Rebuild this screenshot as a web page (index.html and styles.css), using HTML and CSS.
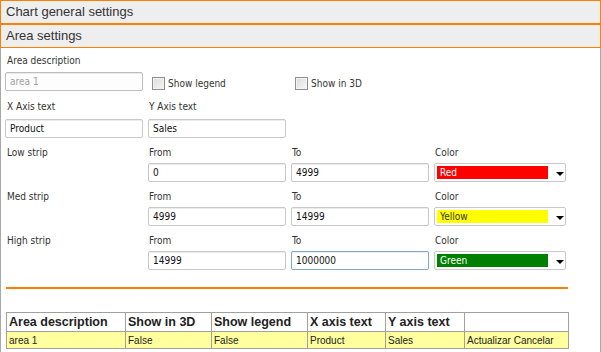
FILE: index.html
```html
<!DOCTYPE html>
<html>
	<head>
		<meta charset="UTF-8">
		<title>Chart settings</title>
		<link rel="stylesheet" href="styles.css">
	</head>
	<body>
		<div class="hdr">Chart general settings</div>
		<div class="hdr">Area settings</div>
		<div class="panel">
			<div class="form">
				<label class="lbl c1">Area description</label>
				<div class="inrow first">
					<div class="txt dis c1">area 1</div>
					<div class="chk"><span class="box"></span>Show legend</div>
					<div class="chk"><span class="box"></span>Show in 3D</div>
				</div>

				<div class="lblrow lbl2">
					<span>X Axis text</span>
					<span>Y Axis text</span>
				</div>
				<div class="inrow ax">
					<div class="txt">Product</div>
					<div class="txt">Sales</div>
				</div>

				<div class="lblrow lbl3">
					<span>Low strip</span>
					<span>From</span>
					<span>To</span>
					<span>Color</span>
				</div>
				<div class="inrow">
					<span></span>
					<div class="txt">0</div>
					<div class="txt">4999</div>
					<div class="sel"><span class="sw red">Red</span><i class="arr"></i></div>
				</div>

				<div class="lblrow lbl3">
					<span>Med strip</span>
					<span>From</span>
					<span>To</span>
					<span>Color</span>
				</div>
				<div class="inrow">
					<span></span>
					<div class="txt">4999</div>
					<div class="txt">14999</div>
					<div class="sel"><span class="sw yellow">Yellow</span><i class="arr"></i></div>
				</div>

				<div class="lblrow lbl3">
					<span>High strip</span>
					<span>From</span>
					<span>To</span>
					<span>Color</span>
				</div>
				<div class="inrow">
					<span></span>
					<div class="txt">14999</div>
					<div class="txt focus">1000000</div>
					<div class="sel"><span class="sw green">Green</span><i class="arr"></i></div>
				</div>
			</div>

			<div class="sep"></div>

			<table class="grid">
				<tr>
					<th class="w1">Area description</th>
					<th class="w2">Show in 3D</th>
					<th class="w3">Show legend</th>
					<th class="w4">X axis text</th>
					<th class="w5">Y axis text</th>
					<th class="w6"></th>
				</tr>
				<tr class="sel-row">
					<td>area 1</td>
					<td>False</td>
					<td>False</td>
					<td>Product</td>
					<td>Sales</td>
					<td>Actualizar Cancelar</td>
				</tr>
			</table>
		</div>
	</body>
</html>
```

FILE: styles.css
```css
*{
	margin: 0;
	padding: 0;
	box-sizing: border-box;
}
body{
	width: 601px;
	height: 352px;
	overflow: hidden;
	background: #fff;
	font-family: "DejaVu Sans Condensed", "Liberation Sans", sans-serif;
	font-size: 10px;
	color: #333;
}
.hdr{
	height: 24px;
	border: 1px solid #ff7f00;
	background: #eeeeee;
	font: 13px/22px "Liberation Sans", sans-serif;
	color: #333;
	padding-left: 5px;
}
.panel{
	height: 304px;
	border-left: 1px solid #a8a8a8;
	border-right: 1px solid #a8a8a8;
	padding: 6px 0 0 4px;
}
.form{
	display: flex;
	flex-direction: column;
}
.lbl{
	display: block;
	height: 13px;
	line-height: 13px;
	padding-left: 2px;
}
.inrow, .lblrow{
	display: grid;
	grid-template-columns: 138px 138px 138px 132px;
	column-gap: 5px;
}
.inrow{
	margin-top: 4px;
	height: 19px;
}
.inrow.first{
	margin-top: 5px;
}
.inrow.ax{
	margin-top: 6px;
}
.lblrow span{
	height: 13px;
	line-height: 13px;
	padding-left: 1px;
}
.lblrow span:first-child{
	padding-left: 2px;
}
.lbl2{
	margin-top: 9px;
}
.lbl3{
	margin-top: 8px;
}
.txt{
	height: 19px;
	border: 1px solid #c8c8c8;
	border-radius: 2px;
	background: #fff;
	color: #111;
	line-height: 17px;
	padding-left: 4px;
	box-shadow: inset 0 1px 0 #ececec;
}
.txt.dis{
	color: #a0a0a0;
	border-color: #bdbdbd;
	background: #fdfdfd;
}
.txt.focus{
	border-color: #7eaacb;
}
.chk{
	display: flex;
	align-items: center;
	padding-left: 4px;
	gap: 3px;
	line-height: 13px;
	padding-top: 3px;
}
.chk .box{
	width: 13px;
	height: 13px;
	border: 1px solid #8f8f8f;
	background: linear-gradient(135deg, #dcdcdc, #f6f6f6);
	box-shadow: inset 0 0 0 1px #f2f2f2;
}
.sel{
	height: 19px;
	border: 1px solid #c8c8c8;
	border-radius: 2px;
	background: #fff;
	display: flex;
	align-items: center;
	padding-left: 2px;
}
.sw{
	width: 111px;
	height: 13px;
	line-height: 13px;
	padding-left: 3px;
	color: #fff;
}
.red{
	background: #ff0000;
}
.yellow{
	background: #ffff00;
	color: #333;
}
.green{
	background: #008000;
}
.arr{
	margin-left: 8px;
	width: 0;
	height: 0;
	border-left: 4px solid transparent;
	border-right: 4px solid transparent;
	border-top: 4px solid #000;
	margin-top: 2px;
}
.sep{
	margin: 17px 0 0 1px;
	width: 562px;
	height: 2px;
	background: #ff7f00;
}
.grid{
	margin: 23px 0 0 1px;
	border-collapse: collapse;
	font-family: "Liberation Sans", sans-serif;
	color: #222;
}
.grid th, .grid td{
	border: 1px solid #a0a0a0;
	text-align: left;
	padding: 0 2px;
	white-space: nowrap;
}
.grid th{
	height: 19px;
	font-size: 12.5px;
	font-weight: bold;
	background: #fff;
}
.grid td{
	height: 17px;
	font-size: 10px;
	background: #ffff9e;
}
.w1{ width: 119px; }
.w2{ width: 86px; }
.w3{ width: 96px; }
.w4{ width: 78px; }
.w5{ width: 79px; }
.w6{ width: 104px; }
```
